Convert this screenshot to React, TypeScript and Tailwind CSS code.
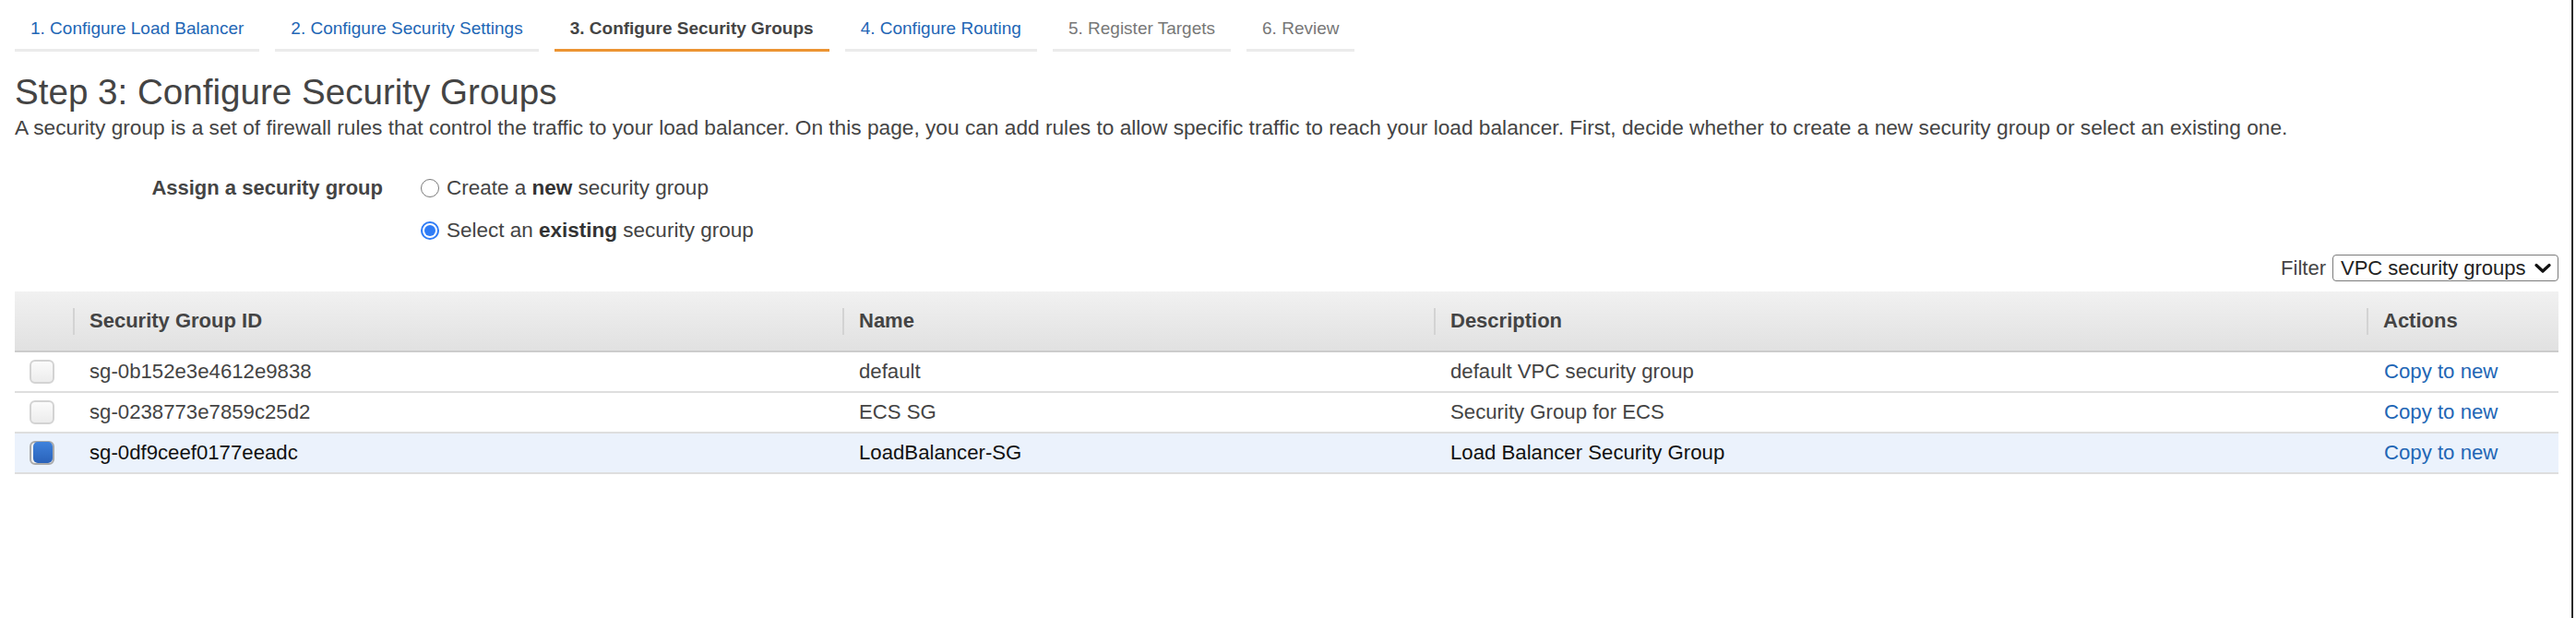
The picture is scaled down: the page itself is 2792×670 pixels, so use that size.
import React from "react";

const tabs = [
  { label: "1. Configure Load Balancer", kind: "link" },
  { label: "2. Configure Security Settings", kind: "link" },
  { label: "3. Configure Security Groups", kind: "active" },
  { label: "4. Configure Routing", kind: "link" },
  { label: "5. Register Targets", kind: "disabled" },
  { label: "6. Review", kind: "disabled" },
];

const rows = [
  { id: "sg-0b152e3e4612e9838", name: "default", desc: "default VPC security group", selected: false },
  { id: "sg-0238773e7859c25d2", name: "ECS SG", desc: "Security Group for ECS", selected: false },
  { id: "sg-0df9ceef0177eeadc", name: "LoadBalancer-SG", desc: "Load Balancer Security Group", selected: true },
];

function Checkbox({ checked }: { checked: boolean }) {
  if (checked) {
    return (
      <div className="w-[27px] h-[26px] rounded-[6px] border-2 border-[#a9a9a9] bg-[#f2f2f2] flex items-end justify-end p-0">
        <div className="w-[21px] h-[23px] rounded-[5px] bg-gradient-to-b from-[#3f82dc] to-[#2a62b9]" />
      </div>
    );
  }
  return (
    <div className="w-[27px] h-[26px] rounded-[6px] border-2 border-[#d3d3d3] bg-gradient-to-b from-[#fbfbfb] to-[#ececec]" />
  );
}

function Radio({ checked }: { checked: boolean }) {
  if (checked) {
    return (
      <div className="w-[20px] h-[20px] rounded-full border-[2px] border-[#2f7cf6] bg-white flex items-center justify-center">
        <div className="w-[12px] h-[12px] rounded-full bg-[#2f7cf6]" />
      </div>
    );
  }
  return <div className="w-[20px] h-[20px] rounded-full border border-[#7a7a7a] bg-white" />;
}

const cols = "grid grid-cols-[63px_834px_641px_1011px_208px]";

export default function App() {
  return (
    <div className="w-[2789px] min-h-[670px] border-r-2 border-[#2a2a2a] bg-white font-['Liberation_Sans',Arial,sans-serif] text-[#444]">
      <div className="pl-[16px] pr-[14px]">
        {/* Wizard tabs */}
        <div className="flex gap-[17px]">
          {tabs.map((t) => (
            <div
              key={t.label}
              className={
                t.kind === "active"
                  ? "px-[17px] pt-[20px] pb-[11px] border-b-[3px] border-[#ec9433] text-[19px] leading-[22px] font-bold text-[#444] whitespace-nowrap"
                  : t.kind === "link"
                  ? "px-[17px] pt-[20px] pb-[11px] border-b-[3px] border-[#ebebeb] text-[19px] leading-[22px] text-[#2266b5] whitespace-nowrap"
                  : "px-[17px] pt-[20px] pb-[11px] border-b-[3px] border-[#ebebeb] text-[19px] leading-[22px] text-[#777] whitespace-nowrap"
              }
            >
              {t.label}
            </div>
          ))}
        </div>

        {/* Heading */}
        <h1 className="mt-[22px] text-[38.6px] leading-[44px] font-normal text-[#444] whitespace-nowrap">Step 3: Configure Security Groups</h1>
        <p className="mt-[3px] text-[22.7px] leading-[26px] text-[#444] whitespace-nowrap">
          A security group is a set of firewall rules that control the traffic to your load balancer. On this page, you can add rules to allow specific traffic to reach your load balancer. First, decide whether to create a new security group or select an existing one.
        </p>

        {/* Assign */}
        <div className="mt-[40px] flex">
          <div className="w-[399px] text-right text-[22px] leading-[26px] font-bold text-[#444]">Assign a security group</div>
          <div className="ml-[41px] flex flex-col gap-[20px]">
            <label className="flex items-center gap-[8px] text-[22.5px] leading-[26px] text-[#444]">
              <Radio checked={false} />
              <span>
                Create a <b className="font-bold text-[#333]">new</b> security group
              </span>
            </label>
            <label className="flex items-center gap-[8px] text-[22.5px] leading-[26px] text-[#444]">
              <Radio checked={true} />
              <span>
                Select an <b className="font-bold text-[#333]">existing</b> security group
              </span>
            </label>
          </div>
        </div>

        {/* Filter */}
        <div className="mt-[13px] flex justify-end items-center gap-[7px]">
          <span className="text-[22px] leading-[26px] text-[#444]">Filter</span>
          <div className="w-[245px] h-[29px] border border-[#7b7b7b] rounded-[4px] flex items-center justify-between pl-[8px] pr-[7px] text-[22px] leading-[26px] text-[#222]">
            <span>VPC security groups</span>
            <svg width="18" height="12" viewBox="0 0 18 12">
              <path d="M2 2.5 L9 9 L16 2.5" fill="none" stroke="#111" strokeWidth="3.2" strokeLinecap="round" strokeLinejoin="round" />
            </svg>
          </div>
        </div>

        {/* Table */}
        <div className="mt-[11px]">
          <div className={`${cols} h-[66px] border-b-2 border-[#cccccc] bg-gradient-to-b from-[#f1f1f1] to-[#e1e1e1]`}>
            <div />
            {["Security Group ID", "Name", "Description", "Actions"].map((h) => (
              <div key={h} className="flex items-center">
                <div className="w-[2px] h-[29px] bg-[#d3d3d3]" />
                <span className="ml-[16px] text-[22px] leading-[26px] font-bold text-[#444] whitespace-nowrap">{h}</span>
              </div>
            ))}
          </div>
          {rows.map((r) => (
            <div
              key={r.id}
              className={`${cols} h-[44px] border-b-2 border-[#dedede] items-center text-[22.2px] leading-[26px] ${
                r.selected ? "bg-[#ebf2fc] text-[#111]" : "bg-white text-[#444]"
              }`}
            >
              <div className="pl-[16px] flex items-center">
                <Checkbox checked={r.selected} />
              </div>
              <div className="pl-[18px] whitespace-nowrap">{r.id}</div>
              <div className="pl-[18px] whitespace-nowrap">{r.name}</div>
              <div className="pl-[18px] whitespace-nowrap">{r.desc}</div>
              <div className="pl-[19px] whitespace-nowrap">
                <a className="text-[#2266b5] cursor-pointer">Copy to new</a>
              </div>
            </div>
          ))}
        </div>
      </div>
    </div>
  );
}
